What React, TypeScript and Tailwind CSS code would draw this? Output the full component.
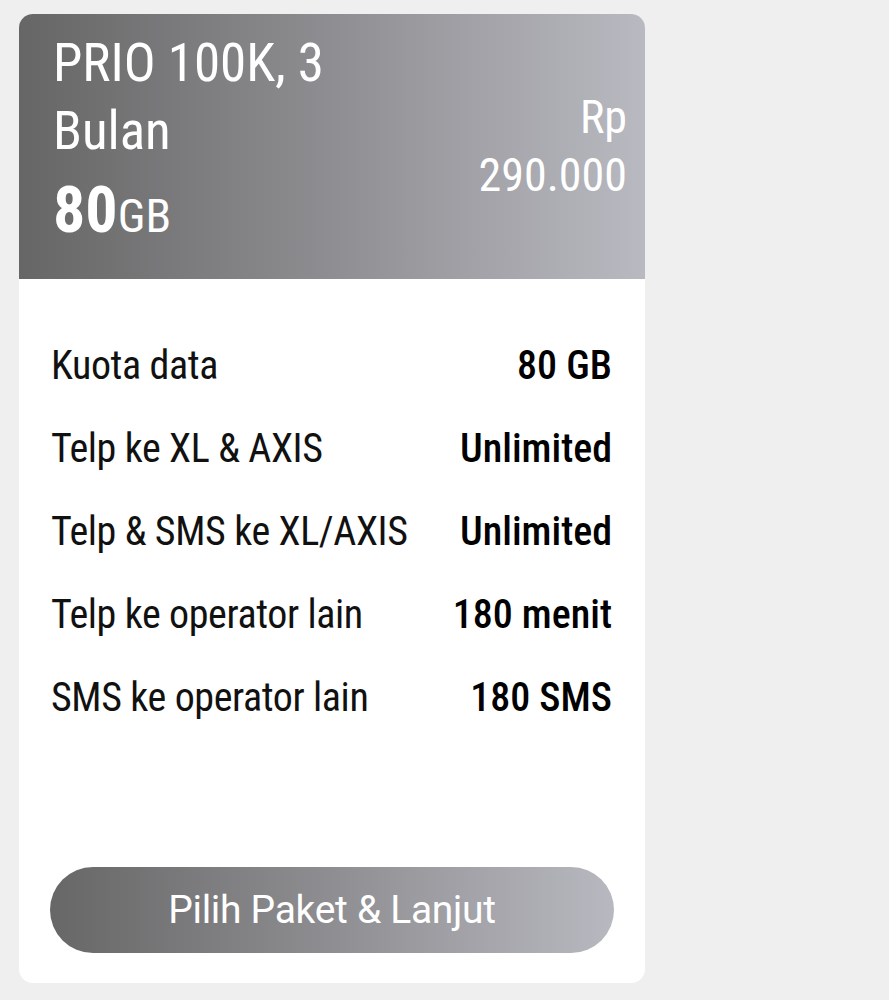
const rows = [
  { label: "Kuota data", value: "80 GB" },
  { label: "Telp ke XL & AXIS", value: "Unlimited" },
  { label: "Telp & SMS ke XL/AXIS", value: "Unlimited" },
  { label: "Telp ke operator lain", value: "180 menit" },
  { label: "SMS ke operator lain", value: "180 SMS" },
];

export default function App() {
  return (
    <div className="min-h-[1000px] bg-[#efefef] pt-[14px] pl-[19px]">
      <div className="flex h-[969px] w-[626px] flex-col overflow-hidden rounded-[14px] bg-white font-['Roboto_Condensed',_'Roboto',_sans-serif]">
        <div className="flex h-[265px] justify-between bg-gradient-to-r from-[#666666] to-[#b9b9c1] pl-[34px] pr-[18px] text-white">
          <div className="pt-[15px]">
            <div className="text-[53px] leading-[68px]">PRIO 100K, 3</div>
            <div className="text-[53px] leading-[68px]">Bulan</div>
            <div className="mt-[6px] leading-[80px]">
              <span className="text-[64px] font-bold">80</span>
              <span className="text-[47px]">GB</span>
            </div>
          </div>
          <div className="flex flex-col justify-center pt-[2px] pb-[4px] text-right text-[46px] leading-[58px]">
            <div>Rp</div>
            <div>290.000</div>
          </div>
        </div>

        <div className="flex flex-col pl-[32px] pr-[33px] pt-[45px] text-[40px] leading-[83px] text-[#111]">
          {rows.map((r) => (
            <div key={r.label} className="flex justify-between">
              <span className="tracking-[-0.4px]">{r.label}</span>
              <span className="font-medium text-black">{r.value}</span>
            </div>
          ))}
        </div>

        <div className="mt-auto px-[31px] pb-[30px]">
          <button className="h-[86px] w-full rounded-full bg-gradient-to-r from-[#676767] to-[#b8b8c0] font-['Roboto',_sans-serif] text-[39px] tracking-[-0.3px] text-white">
            Pilih Paket &amp; Lanjut
          </button>
        </div>
      </div>
    </div>
  );
}
